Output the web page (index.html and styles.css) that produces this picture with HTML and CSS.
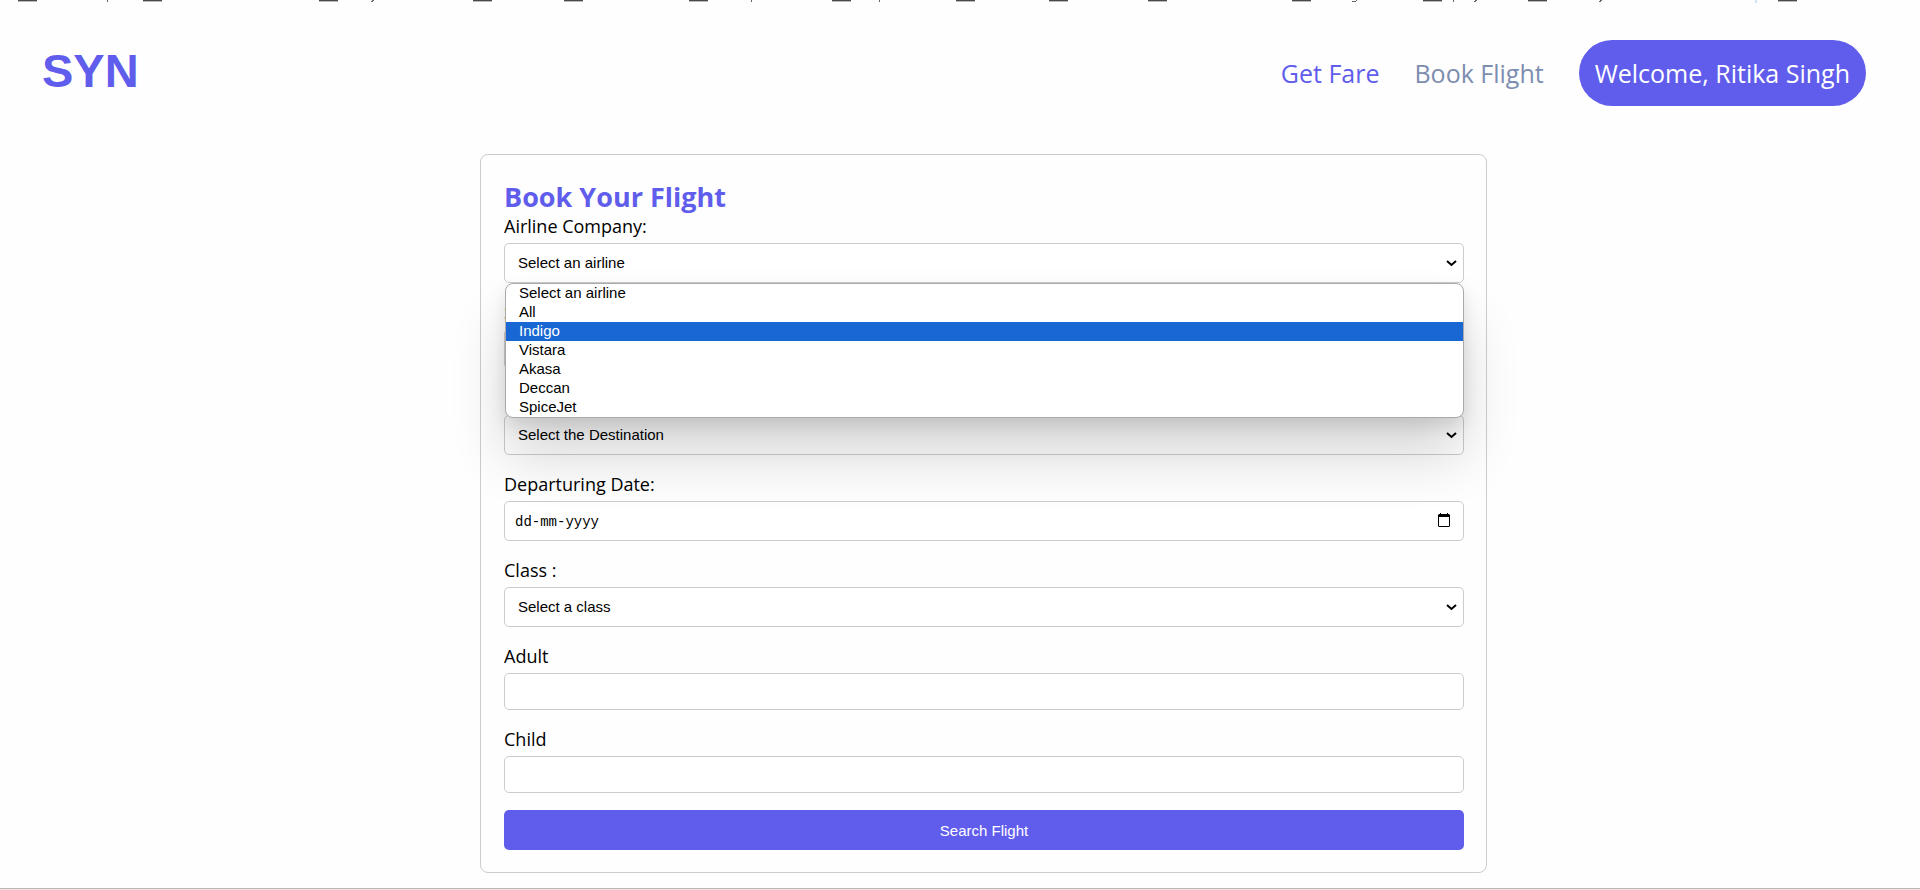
FILE: index.html
```html
<!DOCTYPE html>
<html lang="en">
<head>
<meta charset="utf-8">
<title>SYN - Book Flight</title>
<meta name="viewport" content="width=device-width, initial-scale=1">
<link rel="stylesheet" href="styles.css">
</head>
<body>
<svg class="top-strip" width="1920" height="4" viewBox="0 0 1920 4" aria-hidden="true">
  <path fill="#4a4a4c" d="M18 0h19v1h-19zM143 0h19v1h-19zM319 0h19v1h-19zM473 0h19v1h-19zM564 0h19v1h-19zM689 0h19v1h-19zM832 0h19v1h-19zM956 0h19v1h-19zM1049 0h19v1h-19zM1148 0h19v1h-19zM1292 0h19v1h-19zM1423 0h19v1h-19zM1528 0h19v1h-19zM1778 0h19v1h-19z"/>
  <path fill="#bbb" d="M18 1h19v1h-19zM143 1h19v1h-19zM319 1h19v1h-19zM473 1h19v1h-19zM564 1h19v1h-19zM689 1h19v1h-19zM832 1h19v1h-19zM956 1h19v1h-19zM1049 1h19v1h-19zM1148 1h19v1h-19zM1292 1h19v1h-19zM1423 1h19v1h-19zM1528 1h19v1h-19zM1778 1h19v1h-19z"/>
  <path fill="#666" d="M107 0h1v2h-1zM751 0h1v2h-1zM879 0h1v2h-1zM1453 0h1v2h-1zM372 0h2v1h-1v1h-2v-1h1zM1352 1h4v-1h1v1h-1v1h-4zM1475 0h2v1h-1v1h-2v-1h1zM1600 0h2v1h-1v1h-2v-1h1z"/>
  <path fill="#d3e3fd" d="M1755 0h2v3h-2z"/>
</svg>
<header class="header">
  <a class="logo" href="#">SYN</a>
  <nav class="nav">
    <a class="nav-link nav-link-active" href="#">Get Fare</a>
    <a class="nav-link" href="#">Book Flight</a>
    <button class="user-button" type="button">Welcome, Ritika Singh</button>
  </nav>
</header>
<main class="main">
  <form class="card">
    <h1 class="card-title">Book Your Flight</h1>
    <div class="field">
      <label class="label" for="airline">Airline Company:</label>
      <div class="control-wrap">
        <select class="control select" id="airline"><option>Select an airline</option></select>
        <ul class="options" role="listbox" aria-label="Airline Company">
          <li class="option" role="option">Select an airline</li>
          <li class="option" role="option">All</li>
          <li class="option option-active" role="option" aria-selected="true">Indigo</li>
          <li class="option" role="option">Vistara</li>
          <li class="option" role="option">Akasa</li>
          <li class="option" role="option">Deccan</li>
          <li class="option" role="option">SpiceJet</li>
        </ul>
      </div>
    </div>
    <div class="field">
      <label class="label" for="source">Source:</label>
      <select class="control select" id="source"><option></option></select>
    </div>
    <div class="field">
      <label class="label" for="destination">Destination:</label>
      <select class="control select" id="destination"><option>Select the Destination</option></select>
    </div>
    <div class="field">
      <label class="label" for="date">Departuring Date:</label>
      <div class="control-wrap">
        <input class="control date" id="date" type="text" placeholder="dd-mm-yyyy">
        <button class="calendar" type="button" aria-label="Choose date">
          <svg width="12" height="14" viewBox="0 0 12 14" aria-hidden="true"><path fill="#000" fill-rule="evenodd" d="M2 0h1v1h6V0h1v1h1l1 1v11l-1 1H1l-1-1V2l1-1h1zM1 4v9h10V4z"/></svg>
        </button>
      </div>
    </div>
    <div class="field">
      <label class="label" for="class">Class :</label>
      <select class="control select" id="class"><option>Select a class</option></select>
    </div>
    <div class="field">
      <label class="label" for="adult">Adult</label>
      <input class="control number" id="adult" type="text">
    </div>
    <div class="field">
      <label class="label" for="child">Child</label>
      <input class="control number" id="child" type="text">
    </div>
    <button class="submit" type="submit">Search Flight</button>
  </form>
</main>
<footer class="footer"></footer>
</body>
</html>
```
FILE: styles.css
```css
* {
  box-sizing: border-box;
}

body {
  display: flex;
  flex-direction: column;
  min-height: 100vh;
  margin: 0;
  background: #fefefe;
  color: #000;
  font-family: "Open Sans", sans-serif;
  overflow-x: hidden;
}

.top-strip {
  display: block;
  flex: none;
}

.header {
  display: flex;
  align-items: center;
  justify-content: space-between;
  padding: 36px 54px 48px 42px;
}

.logo {
  padding-bottom: 4px;
  color: #605dec;
  font: bold 47px/56px "Liberation Sans", Arial, sans-serif;
  text-decoration: none;
}

.nav {
  display: flex;
  align-items: center;
  gap: 35px;
}

.nav-link {
  color: #7c8db0;
  font-size: 25px;
  text-decoration: none;
}

.nav-link-active {
  color: #605dec;
}

.user-button {
  padding: 16px;
  border: 0;
  border-radius: 33px;
  background: #605dec;
  color: #fff;
  font: 25px/34px "Open Sans", sans-serif;
}

.main {
  flex: 1;
  padding: 0 calc(22.5% + 1px) 15px 25%;
}

.card {
  padding: 24px 22px 22px 23px;
  border: 1px solid #ccc;
  border-radius: 8px;
}

.card-title {
  margin: 0;
  color: #605dec;
  font-size: 27px;
  font-weight: 700;
  line-height: 35px;
}

.field {
  margin-bottom: 17px;
}

.label {
  display: block;
  margin-bottom: 4px;
  font-size: 18px;
  line-height: 25px;
}

.control-wrap {
  position: relative;
}

.control {
  display: block;
  width: 100%;
  height: 40px;
  padding: 0 8px;
  border: 1px solid #ccc;
  border-radius: 5px;
  background: #fff;
  color: #000;
  font: 15px "Liberation Sans", Arial, sans-serif;
}

.select {
  padding: 0 24px 1px 13px;
  appearance: none;
  background: #fff url("data:image/svg+xml,%3Csvg xmlns='http://www.w3.org/2000/svg' width='11' height='7' viewBox='0 0 11 7'%3E%3Cpath d='M1 1l4.5 4L10 1' fill='none' stroke='%23000' stroke-width='2'/%3E%3C/svg%3E") no-repeat right 6px center;
}

.date {
  padding: 1px 10px 0;
  font: 14px "Liberation Mono", monospace;
}

.date::placeholder {
  color: #000;
}

.number {
  height: 37px;
}

.calendar {
  position: absolute;
  top: 12px;
  right: 14px;
  padding: 0;
  border: 0;
  background: none;
}

.calendar svg {
  display: block;
}

.options {
  position: absolute;
  z-index: 1;
  top: 40px;
  right: 0;
  left: 1px;
  margin: 0;
  padding: 0;
  border: 1px solid #aaa;
  border-radius: 8px;
  background: #fff;
  box-shadow: 0 8px 16px rgba(0, 0, 0, 0.1), 0 38px 56px rgba(0, 0, 0, 0.16);
  font: 15px/17px "Liberation Sans", Arial, sans-serif;
  list-style: none;
}

.option {
  padding: 0 13px 2px;
}

.option-active {
  background: #1967d2;
  color: #fff;
}

.submit {
  display: block;
  width: 100%;
  height: 40px;
  border: 0;
  border-radius: 5px;
  background: #605dec;
  color: #fff;
  font: 15px "Liberation Sans", Arial, sans-serif;
}

.footer {
  height: 2px;
  border-top: 1px solid #c0b6b8;
  background: #f5e0e0;
}
```
